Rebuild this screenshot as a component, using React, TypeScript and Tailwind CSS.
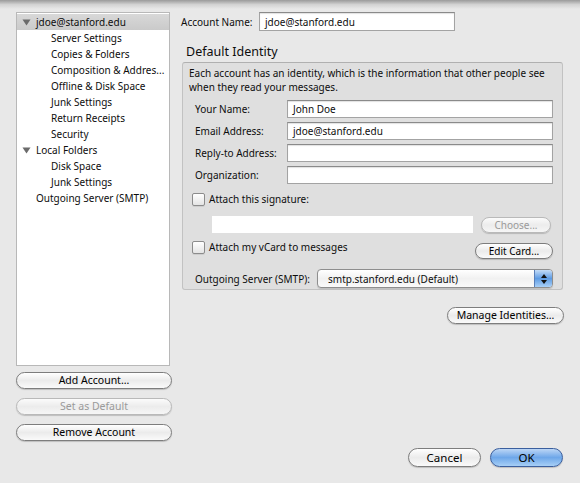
import React from 'react'

const font = { fontFamily: '"Noto Sans", "DejaVu Sans", sans-serif' }

const treeItems = [
  { label: 'jdoe@stanford.edu', level: 0, open: true, selected: true },
  { label: 'Server Settings', level: 1 },
  { label: 'Copies & Folders', level: 1 },
  { label: 'Composition & Addres...', level: 1 },
  { label: 'Offline & Disk Space', level: 1 },
  { label: 'Junk Settings', level: 1 },
  { label: 'Return Receipts', level: 1 },
  { label: 'Security', level: 1 },
  { label: 'Local Folders', level: 0, open: true },
  { label: 'Disk Space', level: 1 },
  { label: 'Junk Settings', level: 1 },
  { label: 'Outgoing Server (SMTP)', level: 0 },
]

function AquaButton({
  children,
  className = '',
  disabled = false,
  primary = false,
}: {
  children: React.ReactNode
  className?: string
  disabled?: boolean
  primary?: boolean
}) {
  const base = primary
    ? 'border-[#3b5f9e] bg-gradient-to-b from-[#bcd6f5] via-[#6ea7e9] to-[#a7cff6] text-black'
    : disabled
      ? 'border-[#b9b9b9] bg-gradient-to-b from-[#fbfbfb] via-[#ececec] to-[#f6f6f6] text-[#9a9a9a]'
      : 'border-[#7d7d7d] bg-gradient-to-b from-white via-[#ebebeb] to-[#fafafa] text-black'
  return (
    <div
      className={`flex items-center justify-center whitespace-nowrap rounded-full border leading-none shadow-[0_1px_1px_rgba(0,0,0,0.18)] ${base} ${className}`}
    >
      {children}
    </div>
  )
}

function TextField({ value = '', className = '' }: { value?: string; className?: string }) {
  return (
    <div
      className={`flex h-[18px] items-center border border-[#a3a3a3] border-t-[#8a8a8a] bg-white px-[5px] shadow-[inset_0_1px_1px_rgba(0,0,0,0.12)] ${className}`}
    >
      {value}
    </div>
  )
}

function Checkbox() {
  return (
    <div className="h-[13px] w-[13px] shrink-0 rounded-[2px] border border-[#8c8c8c] bg-gradient-to-b from-white to-[#e4e4e4] shadow-[0_1px_0_rgba(0,0,0,0.08)]" />
  )
}

function Triangle() {
  return (
    <svg width="9" height="7" viewBox="0 0 9 7" className="shrink-0">
      <path d="M0.5 0.5 L8.5 0.5 L4.5 6.5 Z" fill="#6b6b6b" />
    </svg>
  )
}

function FormRow({ label, value }: { label: string; value?: string }) {
  return (
    <div className="flex h-[18px] items-center">
      <span className="w-[92px] shrink-0 whitespace-nowrap">{label}</span>
      <TextField value={value} className="flex-1" />
    </div>
  )
}

export default function App() {
  return (
    <div
      className="relative h-[483px] w-[580px] overflow-hidden bg-[#e8e8e8] text-[10px] leading-[14px] text-[#0d0d0d]"
      style={font}
    >
      {/* window title shadow */}
      <div className="pointer-events-none absolute inset-x-0 top-0 h-[9px] bg-gradient-to-b from-[#9a9a9a] via-[#d2d2d2] to-[#e8e8e8]" />

      <div className="relative flex pt-[12px]">
        {/* Left column */}
        <div className="ml-[16px] flex w-[156px] flex-col">
          <div className="h-[354px] w-[154px] border border-[#b8b8b8] bg-white pt-[1px]">
            {treeItems.map((item, i) => (
              <div
                key={i}
                className={`flex h-[16px] items-center whitespace-nowrap ${item.selected ? 'bg-gradient-to-b from-[#d8d8d8] to-[#cacaca]' : ''}`}
              >
                {item.level === 0 ? (
                  <>
                    <span className="flex w-[19px] justify-end pr-[5px]">
                      {item.open ? <Triangle /> : null}
                    </span>
                    <span>{item.label}</span>
                  </>
                ) : (
                  <span className="pl-[34px]">{item.label}</span>
                )}
              </div>
            ))}
          </div>

          <div className="mt-[6px] flex flex-col gap-[9px]">
            <AquaButton className="h-[17px] text-[10.5px]">Add Account...</AquaButton>
            <AquaButton className="h-[17px] text-[10.5px]" disabled>
              Set as Default
            </AquaButton>
            <AquaButton className="h-[17px] text-[10.5px]">Remove Account</AquaButton>
          </div>
        </div>

        {/* Right column */}
        <div className="ml-[9px] flex w-[383px] flex-col">
          <div className="flex h-[19px] items-center">
            <span className="w-[78px] whitespace-nowrap">Account Name:</span>
            <TextField value="jdoe@stanford.edu" className="h-[19px] w-[196px]" />
          </div>

          <div className="mt-[13px] pl-[5px] text-[12.5px] leading-[16px]">Default Identity</div>

          <div className="mt-[2px] ml-[1px] h-[228px] w-[381px] rounded-[3px] border border-[#c2c2c2] border-t-[#b0b0b0] bg-[#dfdfdf] pl-[6px] pr-[4px]">
            <p className="mt-[3px] leading-[14px]">
              Each account has an identity, which is the information that other people see when they read your
              messages.
            </p>

            <div className="mt-[6px] flex flex-col gap-[4px] pl-[6px] pr-[5px]">
              <FormRow label="Your Name:" value="John Doe" />
              <FormRow label="Email Address:" value="jdoe@stanford.edu" />
              <FormRow label="Reply-to Address:" />
              <FormRow label="Organization:" />
            </div>

            <div className="mt-[8px] flex h-[14px] items-center gap-[4px] pl-[3px]">
              <Checkbox />
              <span>Attach this signature:</span>
            </div>

            <div className="mt-[10px] flex h-[17px] items-center pl-[23px]">
              <div className="h-[17px] w-[261px] bg-white" />
              <AquaButton className="ml-[8px] mt-[1px] h-[16px] w-[70px]" disabled>
                Choose...
              </AquaButton>
            </div>

            <div className="mt-[8px] flex h-[18px] items-start pl-[3px] pr-[5px]">
              <Checkbox />
              <span className="ml-[4px] leading-[13px]">Attach my vCard to messages</span>
              <AquaButton className="ml-auto mt-[2px] h-[16px] w-[78px]">Edit Card...</AquaButton>
            </div>

            <div className="mt-[10px] flex h-[19px] items-center pl-[6px] pr-[5px]">
              <span className="w-[122px] whitespace-nowrap">Outgoing Server (SMTP):</span>
              <div className="flex h-[19px] flex-1 items-stretch overflow-hidden rounded-[4px] border border-[#8e8e8e] bg-gradient-to-b from-white via-[#f1f1f1] to-[#fafafa] shadow-[0_1px_1px_rgba(0,0,0,0.15)]">
                <span className="flex flex-1 items-center pl-[10px]">smtp.stanford.edu (Default)</span>
                <div className="flex w-[18px] flex-col items-center justify-center gap-[2px] border-l border-[#5a7fb8] bg-gradient-to-b from-[#c4dcf7] via-[#5d9be3] to-[#a9d0f7]">
                  <svg width="6" height="4" viewBox="0 0 6 4">
                    <path d="M0 4 L3 0 L6 4 Z" fill="#111" />
                  </svg>
                  <svg width="6" height="4" viewBox="0 0 6 4">
                    <path d="M0 0 L6 0 L3 4 Z" fill="#111" />
                  </svg>
                </div>
              </div>
            </div>
          </div>

          <div className="mt-[17px] flex justify-end">
            <AquaButton className="h-[17px] w-[117px] text-[10.5px]">Manage Identities...</AquaButton>
          </div>

          <div className="mt-[124px] flex justify-end gap-[9px] pr-[1px]">
            <AquaButton className="h-[19px] w-[73px] text-[11.5px]">Cancel</AquaButton>
            <AquaButton className="h-[19px] w-[73px] text-[11.5px]" primary>
              OK
            </AquaButton>
          </div>
        </div>
      </div>
    </div>
  )
}
